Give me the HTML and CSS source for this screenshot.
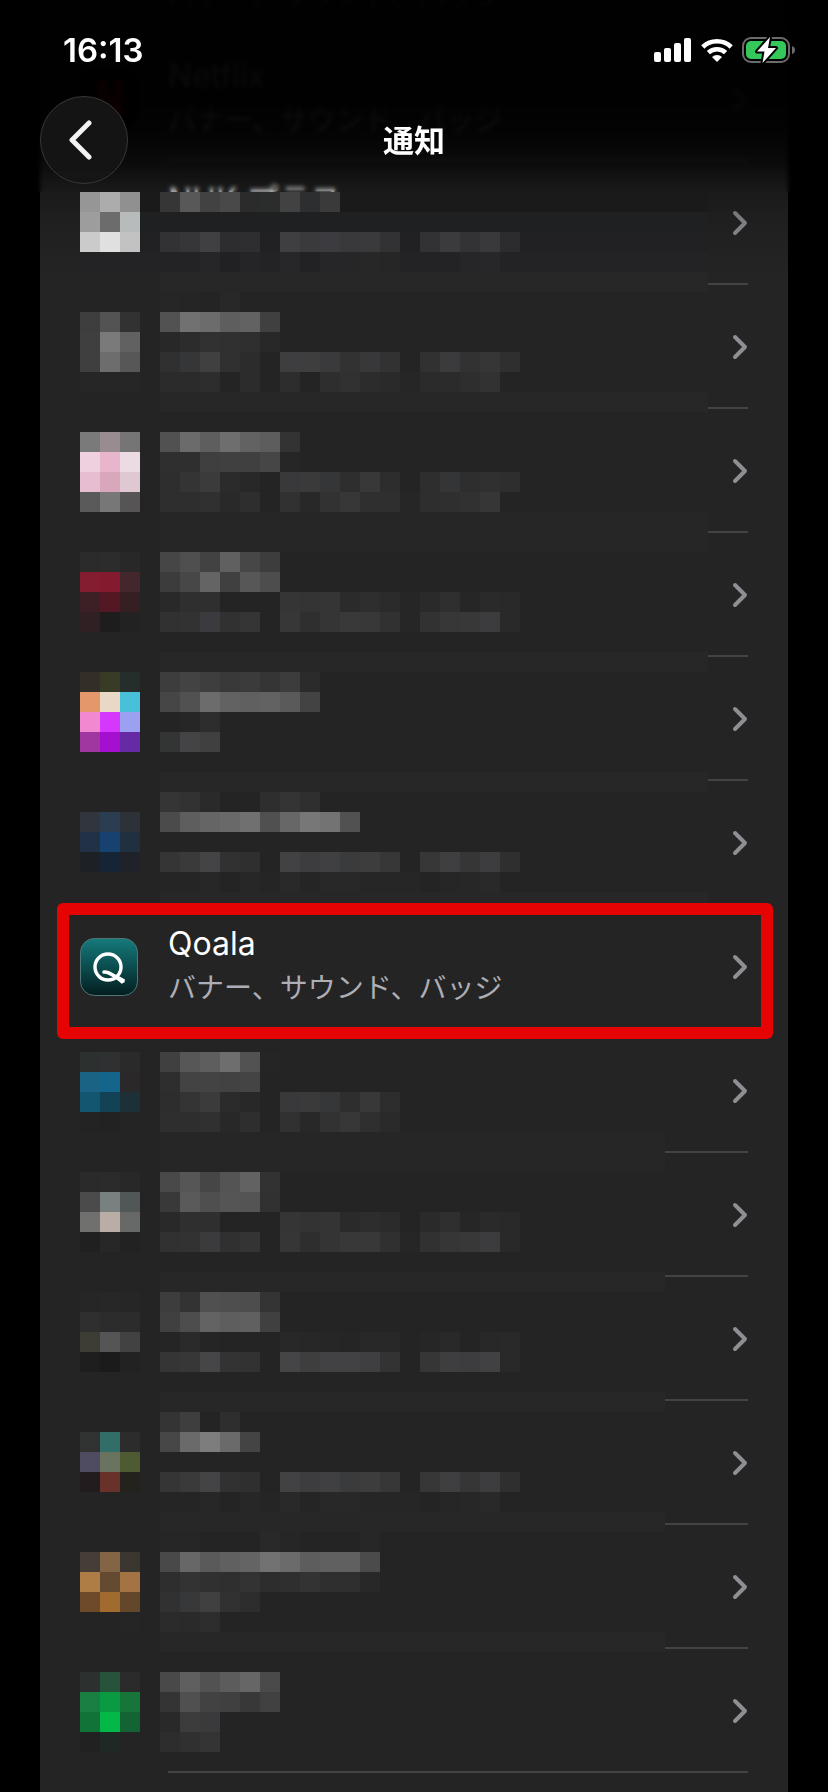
FILE: index.html
```html
<!DOCTYPE html>
<html lang="ja">
<head>
    <meta charset="UTF-8">
    <meta name="viewport" content="width=device-width, initial-scale=1.0">
    <title>通知</title>
    <link rel="stylesheet" href="styles.css">
</head>
<body>
    <header class="header">
        <div class="status-bar">
            <span class="clock">16:13</span>
            <div class="status-icons">
                <svg width="38" height="24" viewBox="0 0 38 24" fill="#fff">
                    <rect x="0" y="14" width="7" height="10" rx="2"/>
                    <rect x="10" y="10" width="7" height="14" rx="2"/>
                    <rect x="20" y="5" width="7" height="19" rx="2"/>
                    <rect x="30" y="0" width="7" height="24" rx="2"/>
                </svg>
                <svg width="32" height="24" viewBox="0 0 32 24" fill="none" stroke="#fff" stroke-width="4.6">
                    <path d="M1.8 9 A20.5 20.5 0 0 1 30.2 9"/>
                    <path d="M7.4 14.7 A12.4 12.4 0 0 1 24.6 14.7"/>
                    <path d="M16 24 L11 19 A7.4 7.4 0 0 1 21 19 Z" fill="#fff" stroke="none"/>
                </svg>
                <svg width="54" height="26" viewBox="0 0 54 26">
                    <rect x="1" y="1" width="46" height="24" rx="8" fill="none" stroke="#6b6b6b" stroke-width="2"/>
                    <path d="M50 9 Q53 10 53 13 Q53 16 50 17 Z" fill="#6b6b6b"/>
                    <rect x="4" y="4" width="40" height="18" rx="5" fill="#34c759"/>
                    <path d="M28 0 L15 14.5 H22.5 L20.5 26 L34 11 H26 Z" fill="#fff" stroke="#000" stroke-width="4" stroke-linejoin="round" paint-order="stroke"/>
                </svg>
            </div>
        </div>
        <nav class="nav-bar">
            <button class="back-btn" type="button" aria-label="戻る">
                <svg width="24" height="40" viewBox="0 0 24 40" fill="none" stroke="#f2f2f2" stroke-width="5" stroke-linecap="round" stroke-linejoin="round">
                    <path d="M20 3 L3 20 L20 37"/>
                </svg>
            </button>
            <h1>通知</h1>
        </nav>
    </header>

    <main class="content">
        <ul class="app-list" id="appList"></ul>
    </main>

    <script src="script.js"></script>
</body>
</html>
```

FILE: styles.css
```css
:root {
    --card: #242424;
    --separator: #434347;
    --secondary: #aeaeb6;
    --highlight: #e60303;
}

* {
    box-sizing: border-box;
    margin: 0;
    padding: 0;
}

body {
    background: #000;
    color: #fff;
    font-family: Inter, "Noto Sans CJK JP", sans-serif;
}

/* Header */
.header {
    position: fixed;
    top: 0;
    left: 0;
    right: 0;
    z-index: 2;
    height: 192px;
    backdrop-filter: blur(2px);
}

.header::before {
    content: "";
    position: absolute;
    inset: 0 0 -80px;
    z-index: -1;
    pointer-events: none;
    background: linear-gradient(rgba(0, 0, 0, 0.97) 0, rgba(0, 0, 0, 0.96) 100px, rgba(0, 0, 0, 0.9) 130px, rgba(0, 0, 0, 0.7) 162px, rgba(0, 0, 0, 0.26) 192px, rgba(0, 0, 0, 0.1) 225px, rgba(0, 0, 0, 0) 272px);
}

.status-bar {
    display: flex;
    justify-content: space-between;
    align-items: center;
    height: 96px;
    padding: 4px 32px 0 63px;
}

.clock {
    font-size: 33px;
    font-weight: 600;
}

.status-icons {
    display: flex;
    align-items: center;
    gap: 9px;
}

.nav-bar {
    display: grid;
    grid-template-columns: 88px 1fr 88px;
    align-items: center;
    padding: 0 40px;
}

.nav-bar h1 {
    padding-bottom: 4px;
    font-size: 31px;
    font-weight: 700;
    text-align: center;
}

.back-btn {
    display: flex;
    align-items: center;
    justify-content: center;
    width: 88px;
    height: 88px;
    padding-right: 6px;
    border: 1px solid #383838;
    border-radius: 50%;
    background: rgba(21, 21, 21, 0.94);
    cursor: pointer;
}

/* App list */
.content {
    display: flow-root;
    padding: 0 40px;
}

.app-list {
    margin-top: -87px;
    padding: 0 40px 19px;
    background: var(--card);
    list-style: none;
}

.app-item {
    position: relative;
}

.app-link {
    display: flex;
    align-items: center;
    gap: 30px;
    height: 124px;
    background: linear-gradient(var(--separator), var(--separator)) no-repeat 88px 100% / 100% 2px;
    color: inherit;
    text-decoration: none;
}

.app-icon {
    flex: none;
    width: 58px;
    height: 58px;
}

.app-text {
    flex: 1;
}

.app-name {
    font-size: 32px;
    line-height: 42px;
}

.app-detail {
    color: var(--secondary);
    font-size: 28px;
    line-height: 46px;
}

.chevron {
    flex: none;
}

.mosaic {
    position: absolute;
    top: 0;
    left: 0;
    z-index: 1;
    overflow: visible;
    pointer-events: none;
}

.app-item.under-header .mosaic {
    z-index: 3;
}

.app-item.highlight::after {
    content: "";
    position: absolute;
    inset: -2px -25px -10px -23px;
    z-index: 2;
    border: 12px solid var(--highlight);
    border-radius: 6px;
    pointer-events: none;
}
```

FILE: script.js
```js
const CELL = 20;
const DETAIL = 'バナー、サウンド、バッジ';

const icons = {
    netflix: '<rect width="58" height="58" rx="14" fill="#000"/><path d="M20 10V48M38 10V48M20 10L38 48" stroke="#e50914" stroke-width="8"/>',
    plain: '<rect width="58" height="58" rx="14" fill="#ddd"/>',
    qoala: `<defs><linearGradient id="teal" x1="0" y1="0" x2="0" y2="1">
            <stop offset="0" stop-color="#157a7c"/><stop offset="0.5" stop-color="#0c4c4e"/><stop offset="1" stop-color="#031d1e"/>
        </linearGradient></defs>
        <rect x="0.5" y="0.5" width="57" height="57" rx="14" fill="url(#teal)" stroke="#4f7778"/>
        <circle cx="28" cy="29" r="13" fill="none" stroke="#fff" stroke-width="3.4"/>
        <path d="M24 34C30 33 35 40 43 43" fill="none" stroke="#fff" stroke-width="3.6" stroke-linecap="round"/>
        <path d="M37 37L45 41.500L42 46L35 40Z" fill="#fff"/>`
};

// cells: one string per mosaic line, two hex digits = grey, six = colour, "." = clear.
// The first three cells cover the icon, the rest start after a one-cell gap.
const apps = [
    { name: '', detail: DETAIL },
    { name: 'Netflix', detail: DETAIL, icon: 'netflix' },
    { name: 'NHK プラス', detail: DETAIL, icon: 'plain', top: 31, width: 628, band: [111, 20], underHeader: true,
        base: ['1a1a1a', '1e2021', '212123', '232325'],
        cells: [
            '96 ac 90 36 58 42 49 2b 2b2d2c 42 2d2e30 3a',
            '9d 6c b7bbbc',
            'cb e0 c2 323234 363638 404042 2d2d2f 2e2e30 . 3f3f41 3a3a3c 3c3b40 39393b 3a3a3c 323234 . 323234 3b3b3d 333335 39393b 2c2c2e',
            '. . . . . 262628 212123 252527 . 272729 222224 262628 262628 272727 262626 . . . 262628 272729'
        ] },
    { top: 7, width: 628, band: [107, 20], cells: [
        '. . . 26 25 24 28',
        '3e 53 32 52 71 6c 5e 62 40',
        '3f 7a 61 28 2c 31 30 2f 28',
        '3f 6d 57 30 353638 40 30 2c . 3e3e41 3e 3a3a3c 32 38373a 32 . 31 3b3b3e 32 36 2f',
        '26 26 26 2b 2b 2d 24 2c . 2d 24 2e 31 2c 2a 26 2b 2b 2e 32' ] },
    { top: 23, width: 628, band: [103, 40], cells: [
        '7a 988c90 75 51 6b 5e 6e 62 5d 33',
        'efd0df e9b5cc ecdbe2 2f 2f 3f 40 40 46 26',
        'e7bed1 d8a7bb dfc8d1 2e 34 3b 2b 28 . 39393c 3a 353638 2e 38 2d . 2e 343537 2e 30 2e',
        '5a 77 575455 2e 2e 30 29 2e . 31 28 32 37 2f 2f 26 2e 2f 31 36' ] },
    { top: 19, width: 628, band: [119, 20], cells: [
        '2b 2c 28 46 4f 42 60 47 3d',
        '851d31 841a2e 43272c 3c 47 64 40 57 4d',
        '3c2025 541824 361f22 29 2f 2f . . . 35 34 35 2b 2e 2b 26 2a 2f 26 2a 29',
        '302024 1d 22 31 32 3b3b3f 31 35 . 37 2f 35 39 38 31 26 32 37 38 3c3c3f 29' ] },
    { top: 15, width: 628, band: [115, 20], cells: [
        '332e27 383b25 252e2b 3d 43 3e 39 3b 35 3c 2b',
        'e5976c ead8c7 48c0d9 46 51 6c 62 60 62 5a 43',
        'f288cf d537fc 9ca0f0 24 26 2d',
        'a036a0 a40fd0 672aa5 333534 444346 40' ] },
    { top: 11, width: 628, band: [111, 20], cells: [
        '. . . 35 32 2a . . 2e 34 2f',
        '31363e 2b3d50 2d3239 4b 5e 65 69 70 50 67 77 73 51',
        '213246 17416f 20303f',
        '1d2025 152535 20222a 35 3a 444346 31 2f . 424144 3d3d3f 403f42 3a3b3d 3d 37 . 37 3f3e41 36 3d3c3f 2f',
        '. . . 25 25 27 24 27 25 29 25 28 28 26 26 26 24 26 27 29' ] },
    { name: 'Qoala', detail: DETAIL, icon: 'qoala', highlight: true },
    { top: 23, width: 585, band: [103, 40], cells: [
        '2c302f 2e3031 2a 40 57 5e 6e 52 25',
        '1b6385 13658c 2a2829 2e 43 43 42 44',
        '13566f 134256 1d3038 2d 34 3b 2b 28 . 39393c 3a 363739 2e 38 2d',
        '23 22 . 2e 2e 30 28 2e . 31 28 32 37 2f 2a' ] },
    { top: 19, width: 585, band: [119, 20], cells: [
        '2a 2b 28 49 56 46 54 62 32',
        '4a4b4a 798180 515656 39 5a 4f 55 54 31',
        '70716f b9ada6 666968 29 2f 2f . . . 35 33 34 2a 2d 2b . 2a 2f 26 2a 29',
        '20 27 22 31 32 3b3b3e 30 34 . 36 2e 34 38 38 30 26 31 36 38 3c3c3f 29' ] },
    { top: 15, width: 585, band: [115, 20], cells: [
        '26 27 26 3d 33 50 4e 4d 34',
        '2f 2c 2c 40 4d 63 5e 60 40',
        '3d3d36 55 42 25 2a 25 . . . 28 27 26 25 28 28 . 26 29 . 28 29',
        '1e 1b 22 35 37 464548 33 32 . 454447 3e 424144 424144 3f3e41 33 . 36 3e3d40 3d3c3f 414043 29' ] },
    { top: 11, width: 585, band: [111, 20], cells: [
        '. . . 34 3e 24 2e',
        '303332 316e68 2c 47 6a 7d 6a 44',
        '4f4c62 69735f 4d5a32',
        '231c1e 68312a 23221d 35 3a 444346 31 2f . 424144 3d3d3f 403f42 3a3b3d 3d 37 . 37 3f3e41 36 3d3c3f 2f',
        '. . . 25 25 27 24 27 25 29 25 28 28 26 26 26 24 26 27 29' ] },
    { top: 7, width: 585, band: [107, 20], cells: [
        '. . . 26 26 . . . 29 26 . . . 27',
        '453d36 836445 3c3630 49 67 5a 60 64 72 6b 5d 60 60 4b',
        'ae7d46 634a31 a37343 2e 33 30 2f 33 2d 2f 33 2f 2f 28',
        '6e4a28 a16a2f 62472a 31 37383a 40 31 2d',
        '. . 25 2b 2a 2d' ] },
    { top: 23, width: 585, cells: [
        '2c302f 26543a 2b 49 5f 52 5c 66 4a',
        '1a8041 0a9b42 177539 34 50 42 40 38 41',
        '117337 03b846 146334 29 3c 3a3a3d',
        '21 1e2824 . 2d 30 34' ] }
];

function hex(cell) {
    return '#' + (cell.length === 2 ? cell.repeat(3) : cell);
}

function rect(x, y, width, height, fill) {
    return `<rect x="${x}" y="${y}" width="${width}" height="${height}" fill="${fill}"/>`;
}

function mosaic(app) {
    if (!app.cells) return '';
    let out = '';
    (app.base || []).forEach((fill, i) => {
        out += rect(0, app.top + i * CELL, app.width, CELL, hex(fill));
    });
    if (app.band) {
        out += rect(80, app.band[0], app.width - 80, app.band[1], app.band[1] > CELL ? '#262626' : '#272727');
    }
    app.cells.forEach((line, row) => {
        line.split(' ').forEach((cell, i) => {
            if (cell === '.') return;
            const col = i < 3 ? i : i + 1;
            out += rect(col * CELL, app.top + row * CELL, CELL, CELL, hex(cell));
        });
    });
    return `<svg class="mosaic" width="${app.width}" height="124" shape-rendering="crispEdges">${out}</svg>`;
}

document.getElementById('appList').innerHTML = apps.map(app => `
    <li class="app-item${app.highlight ? ' highlight' : ''}${app.underHeader ? ' under-header' : ''}">
        <a class="app-link" href="#">
            <svg class="app-icon" viewBox="0 0 58 58">${icons[app.icon] || ''}</svg>
            <div class="app-text">
                ${app.detail ? `<p class="app-name">${app.name || '&nbsp;'}</p><p class="app-detail">${app.detail}</p>` : ''}
            </div>
            <svg class="chevron" width="16" height="26" viewBox="0 0 16 26" fill="none" stroke="#8e8e93" stroke-width="4" stroke-linecap="round" stroke-linejoin="round">
                <path d="M3 3 L13 13 L3 23"/>
            </svg>
        </a>
        ${mosaic(app)}
    </li>`).join('');
```
